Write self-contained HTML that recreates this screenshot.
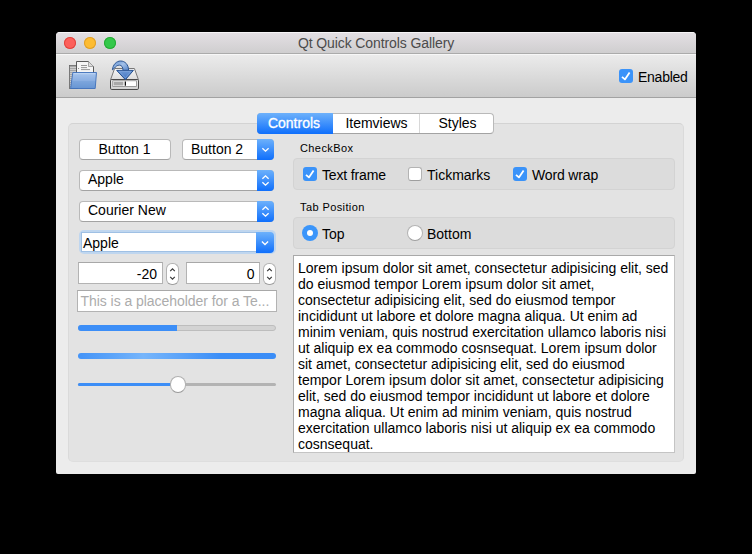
<!DOCTYPE html>
<html><head><meta charset="utf-8">
<style>
*{box-sizing:border-box;margin:0;padding:0}
html,body{width:752px;height:554px;background:#000;overflow:hidden;font-family:"Liberation Sans",sans-serif;font-size:14px;color:#000;letter-spacing:0}
.a{position:absolute}
#win{left:56px;top:32px;width:640px;height:442px;background:#ececec;border-radius:4px 4px 2px 2px;overflow:hidden}
#title{left:0;top:0;width:640px;height:22px;background:linear-gradient(#f6f4f6 0,#f6f4f6 1px,#e3dfe3 1px,#cfcecf);border-bottom:1px solid #ababab}
#title .t{left:0;width:640px;top:4px;text-align:center;color:#4b4b4b;line-height:14px;letter-spacing:-0.1px}
.tl{width:12px;height:12px;border-radius:50%;top:5px}
#tool{left:0;top:22px;width:640px;height:44px;background:linear-gradient(#f7f7f7 0,#f7f7f7 1px,#ebebeb 1px,#cbcbcb);border-bottom:1px solid #a2a2a2}
#frame{left:12px;top:91px;width:616px;height:339px;background:#e3e3e3;border:1px solid #dadada;border-top-color:#d3d3d3;border-bottom-color:#dedede;border-radius:5px}
.btn{background:#fff;border:1px solid #b9b9b9;border-bottom-color:#a3a3a3;border-radius:4px;line-height:19px;text-align:center}
.cmb{background:#fff;border:1px solid #b9b9b9;border-bottom-color:#a3a3a3;border-radius:4px;line-height:17px;padding-left:8px}
.blue{background:linear-gradient(#6db1fb,#0f6ffc);}
.arr{position:absolute;right:-1px;top:-1px;width:17px;height:21px;border-radius:0 4px 4px 0}
.field{background:#fff;border:1px solid #b3b3b3;border-top-color:#a8a8a8}
.grp{background:#dcdcdc;border:1px solid #d3d3d3;border-radius:4px}
.lbl{font-size:11px;letter-spacing:0.4px;line-height:13px}
.cb{width:14px;height:14px;border-radius:3px}
.cbon{background:#3b93f9}
.cboff{background:#fff;border:1px solid #b3b3b3;border-bottom-color:#9e9e9e}
.step{background:#fff;border:1px solid #b3b3b3;border-bottom-color:#9e9e9e;border-radius:6px}
</style></head><body>
<div id="win" class="a">
  <div id="title" class="a">
    <div class="a tl" style="left:8px;background:#fc605b;box-shadow:inset 0 0 0 1px #e0443e"></div>
    <div class="a tl" style="left:28px;background:#fdbc32;box-shadow:inset 0 0 0 1px #df9f2a"></div>
    <div class="a tl" style="left:48px;background:#34c84a;box-shadow:inset 0 0 0 1px #27aa35"></div>
    <div class="a t">Qt Quick Controls Gallery</div>
  </div>
  <div id="tool" class="a">
    <div class="a cb cbon" style="left:563px;top:15px"></div>
    <svg class="a" style="left:563px;top:15px" width="14" height="14" viewBox="0 0 14 14"><path d="M3 7.9l2.9 2.5 4.7-6.8" fill="none" stroke="#fff" stroke-width="1.8" stroke-linejoin="round"/></svg>
    <div class="a" style="left:582px;top:16px;line-height:14px;letter-spacing:-0.25px">Enabled</div>
  </div>
  <div id="frame" class="a"></div>
</div>

<!-- folder icon -->
<svg class="a" style="left:66px;top:58px" width="34" height="34" viewBox="0 0 34 34">
  <defs>
    <linearGradient id="fg" x1="0" y1="0" x2="0" y2="1">
      <stop offset="0" stop-color="#a8c5ec"/><stop offset="0.5" stop-color="#8bafe2"/><stop offset="0.56" stop-color="#7ca5dc"/><stop offset="1" stop-color="#6795d3"/>
    </linearGradient>
  </defs>
  <rect x="3.5" y="7.5" width="8" height="23" fill="#a6a6a6" stroke="#666" stroke-width="0.8"/>
  <path d="M4 9.5h7M4 11.5h7M4 13.5h7M4 15.5h7M4 17.5h7M4 19.5h7M4 21.5h7M4 23.5h7M4 25.5h7M4 27.5h7M4 29.5h7" stroke="#cdcdcd" stroke-width="1"/>
  <path d="M10.5 3.5H22.5L27.5 8.5V16H10.5Z" fill="#f5f5f5" stroke="#4a4a4a" stroke-width="0.9"/>
  <path d="M22.5 3.5V8.5H27.5" fill="#ddd" stroke="#777" stroke-width="0.6"/>
  <path d="M15 7.5h6M15 9.6h6M15 11.6h9" stroke="#7d7d7d" stroke-width="0.8"/>
  <circle cx="12.6" cy="10.4" r="0.5" fill="#666"/>
  <path d="M6.8 14.5H30.5L29.2 30.5H4.6Z" fill="url(#fg)" stroke="#3e6fba" stroke-width="0.9"/>
  <path d="M7.6 15.7H29.2" stroke="#c6dbf4" stroke-width="0.8"/>
</svg>
<!-- save icon -->
<svg class="a" style="left:106px;top:58px" width="36" height="36" viewBox="0 0 36 36">
  <defs>
    <linearGradient id="dg" x1="0" y1="0" x2="0" y2="1"><stop offset="0" stop-color="#f7f7f7"/><stop offset="1" stop-color="#dcdcdc"/></linearGradient>
    <linearGradient id="bg2" x1="0" y1="0" x2="0" y2="1"><stop offset="0" stop-color="#f0f0f0"/><stop offset="1" stop-color="#d0d0d0"/></linearGradient>
    <linearGradient id="ag" x1="0" y1="0" x2="1" y2="1"><stop offset="0" stop-color="#5f8ed0"/><stop offset="0.5" stop-color="#a3c1e8"/><stop offset="1" stop-color="#5584c8"/></linearGradient>
    <linearGradient id="hg" x1="0" y1="0" x2="0" y2="1"><stop offset="0" stop-color="#6f9ad6"/><stop offset="1" stop-color="#3f72bf"/></linearGradient>
  </defs>
  <path d="M8.6 10.5H28.4L32.4 21.6H4.6Z" fill="url(#dg)" stroke="#6b6b6b" stroke-width="0.9"/>
  <rect x="4.5" y="21.5" width="28" height="10" rx="1.3" fill="url(#bg2)" stroke="#4a4a4a" stroke-width="1"/>
  <rect x="6.8" y="22.8" width="23.6" height="5.6" fill="#fff" stroke="#7a7a7a" stroke-width="0.7"/>
  <rect x="7.6" y="23.7" width="9.8" height="3.8" fill="#a9a9a9"/>
  <rect x="18.7" y="23.5" width="1.3" height="4.2" fill="#111"/>
  <path d="M6.4 11.8C7 6.6 10.4 3 14.6 3C19 3 22.6 6.6 22.6 12.4H17C17 9.3 15.8 7.1 13.3 7.1C11.3 7.1 9.5 8.6 8.4 10.2Z" fill="url(#ag)" stroke="#25508f" stroke-width="0.95"/>
  <path d="M10.7 12.4H27.4L19.4 21.7Z" fill="url(#hg)" stroke="#25508f" stroke-width="1" stroke-linejoin="round"/>
  <path d="M13.2 13.3H24.9L19.4 19.9Z" fill="none" stroke="#86abdd" stroke-width="0.6" stroke-linejoin="round"/>
</svg>

<!-- tab bar -->
<div class="a" style="left:257px;top:113px;width:237px;height:21px;background:#fff;border:1px solid #b9b9b9;border-bottom-color:#a3a3a3;border-radius:4px"></div>
<div class="a blue" style="left:257px;top:113px;width:76px;height:21px;border-radius:4px 0 0 4px"></div>
<div class="a" style="left:257px;top:113px;width:74px;height:21px;color:#fff;text-align:center;line-height:20px;-webkit-text-stroke:0.3px #fff">Controls</div>
<div class="a" style="left:333px;top:114px;width:87px;height:19px;text-align:center;line-height:19px">Itemviews</div>
<div class="a" style="left:419px;top:114px;width:1px;height:19px;background:#d8d8d8"></div>
<div class="a" style="left:421px;top:114px;width:73px;height:19px;text-align:center;line-height:19px">Styles</div>

<!-- left column -->
<div class="a btn" style="left:79px;top:139px;width:92px;height:21px;padding-right:1px">Button 1</div>
<div class="a btn" style="left:182px;top:139px;width:92px;height:21px;text-align:left;padding-left:8px">Button 2
  <div class="arr blue"></div>
  <svg class="a" style="right:-1px;top:-1px" width="17" height="21" viewBox="0 0 17 21"><path d="M5.4 9.2l3.1 3 3.1-3" fill="none" stroke="#fff" stroke-width="1.3"/></svg>
</div>
<div class="a cmb" style="left:79px;top:170px;width:195px;height:21px">Apple
  <div class="arr blue"></div>
  <svg class="a" style="right:-1px;top:-1px" width="17" height="21" viewBox="0 0 17 21"><path d="M5.4 8.8l3.1-3 3.1 3M5.4 12.2l3.1 3 3.1-3" fill="none" stroke="#fff" stroke-width="1.3"/></svg>
</div>
<div class="a cmb" style="left:79px;top:201px;width:195px;height:21px">Courier New
  <div class="arr blue"></div>
  <svg class="a" style="right:-1px;top:-1px" width="17" height="21" viewBox="0 0 17 21"><path d="M5.4 8.8l3.1-3 3.1 3M5.4 12.2l3.1 3 3.1-3" fill="none" stroke="#fff" stroke-width="1.3"/></svg>
</div>
<!-- editable combo -->
<div class="a" style="left:79px;top:230px;width:197px;height:24px;border-radius:5px;background:#bfd6ef"></div>
<div class="a" style="left:81px;top:232px;width:177px;height:20px;background:#fff;border:1px solid #9fc0e4"></div>
<div class="a blue" style="left:256px;top:232px;width:18px;height:21px;border-radius:0 4px 4px 0"></div>
<svg class="a" style="left:256px;top:232px" width="18" height="21" viewBox="0 0 18 21"><path d="M5.9 9.5l3.1 3 3.1-3" fill="none" stroke="#fff" stroke-width="1.3"/></svg>
<div class="a" style="left:83px;top:235px;line-height:17px">Apple</div>
<!-- spinboxes -->
<div class="a field" style="left:78px;top:262px;width:85px;height:22px;text-align:right;padding-right:5px;padding-top:1px;line-height:20px">-20</div>
<div class="a step" style="left:166px;top:263px;width:13px;height:22px"></div>
<svg class="a" style="left:166px;top:263px" width="13" height="22" viewBox="0 0 13 22"><path d="M4.2 8.2l2.3-2.3 2.3 2.3M4.2 13.8l2.3 2.3 2.3-2.3" fill="none" stroke="#3a3a3a" stroke-width="1.2"/></svg>
<div class="a field" style="left:186px;top:262px;width:74px;height:22px;text-align:right;padding-right:4.5px;padding-top:1px;line-height:20px">0</div>
<div class="a step" style="left:263px;top:263px;width:13px;height:22px"></div>
<svg class="a" style="left:263px;top:263px" width="13" height="22" viewBox="0 0 13 22"><path d="M4.2 8.2l2.3-2.3 2.3 2.3M4.2 13.8l2.3 2.3 2.3-2.3" fill="none" stroke="#3a3a3a" stroke-width="1.2"/></svg>
<!-- text field -->
<div class="a field" style="left:77px;top:290px;width:200px;height:22px;padding-left:2.5px;line-height:20px;color:#acacac;white-space:nowrap;overflow:hidden;letter-spacing:-0.05px">This is a placeholder for a Te...</div>
<!-- progress bars -->
<div class="a" style="left:78px;top:325px;width:198px;height:6px;border-radius:3px;background:#d3d3d3;border:1px solid #bdbdbd"></div>
<div class="a" style="left:78px;top:325px;width:99px;height:6px;border-radius:3px 0 0 3px;background:#3c8ef7"></div>
<div class="a" style="left:78px;top:353px;width:198px;height:6px;border-radius:3px;background:linear-gradient(90deg,#4494f8 0%,#5aa3f9 16%,#76b5fb 33%,#5ba3f9 52%,#3b8ef7 72%,#3a8df7 100%)"></div>
<!-- slider -->
<div class="a" style="left:78px;top:383px;width:198px;height:3px;border-radius:1.5px;background:#b3b3b3"></div>
<div class="a" style="left:78px;top:383px;width:100px;height:3px;border-radius:1.5px;background:#3c8ef7"></div>
<div class="a" style="left:169.6px;top:376.2px;width:16.4px;height:16.6px;border-radius:50%;background:#fff;border:1px solid #b0b0b0;border-bottom-color:#999"></div>

<!-- right column -->
<div class="a lbl" style="left:300px;top:142px">CheckBox</div>
<div class="a grp" style="left:293px;top:158px;width:382px;height:32px"></div>
<div class="a cb cbon" style="left:303px;top:167px"></div>
<svg class="a" style="left:303px;top:167px" width="14" height="14" viewBox="0 0 14 14"><path d="M3 7.9l2.9 2.5 4.7-6.8" fill="none" stroke="#fff" stroke-width="1.8" stroke-linejoin="round"/></svg>
<div class="a" style="left:322px;top:168px;line-height:14px;letter-spacing:-0.15px">Text frame</div>
<div class="a cb cboff" style="left:408px;top:167px"></div>
<div class="a" style="left:427px;top:168px;line-height:14px">Tickmarks</div>
<div class="a cb cbon" style="left:513px;top:167px"></div>
<svg class="a" style="left:513px;top:167px" width="14" height="14" viewBox="0 0 14 14"><path d="M3 7.9l2.9 2.5 4.7-6.8" fill="none" stroke="#fff" stroke-width="1.8" stroke-linejoin="round"/></svg>
<div class="a" style="left:532px;top:168px;line-height:14px;letter-spacing:-0.15px">Word wrap</div>

<div class="a lbl" style="left:300px;top:201px">Tab Position</div>
<div class="a grp" style="left:293px;top:217px;width:382px;height:32px"></div>
<div class="a" style="left:302px;top:225px;width:16px;height:16px;border-radius:50%;background:#3b95fa"></div>
<div class="a" style="left:307px;top:230px;width:6px;height:6px;border-radius:50%;background:#fff"></div>
<div class="a" style="left:322px;top:227px;line-height:14px">Top</div>
<div class="a" style="left:407px;top:225px;width:16px;height:16px;border-radius:50%;background:#fff;border:1px solid #b3b3b3;border-bottom-color:#9e9e9e"></div>
<div class="a" style="left:427px;top:227px;line-height:14px">Bottom</div>

<div class="a" style="left:293px;top:255px;width:382px;height:198px;background:#fff;border:1px solid #a9a9a9;border-right-color:#c4c4c4;border-bottom-color:#c4c4c4"></div>
<div class="a" style="left:298px;top:260px;line-height:16px;white-space:pre">Lorem ipsum dolor sit amet, consectetur adipisicing elit, sed
do eiusmod tempor Lorem ipsum dolor sit amet,
consectetur adipisicing elit, sed do eiusmod tempor
incididunt ut labore et dolore magna aliqua. Ut enim ad
minim veniam, quis nostrud exercitation ullamco laboris nisi
ut aliquip ex ea commodo cosnsequat. Lorem ipsum dolor
sit amet, consectetur adipisicing elit, sed do eiusmod
tempor Lorem ipsum dolor sit amet, consectetur adipisicing
elit, sed do eiusmod tempor incididunt ut labore et dolore
magna aliqua. Ut enim ad minim veniam, quis nostrud
exercitation ullamco laboris nisi ut aliquip ex ea commodo
cosnsequat.</div>
</body></html>
